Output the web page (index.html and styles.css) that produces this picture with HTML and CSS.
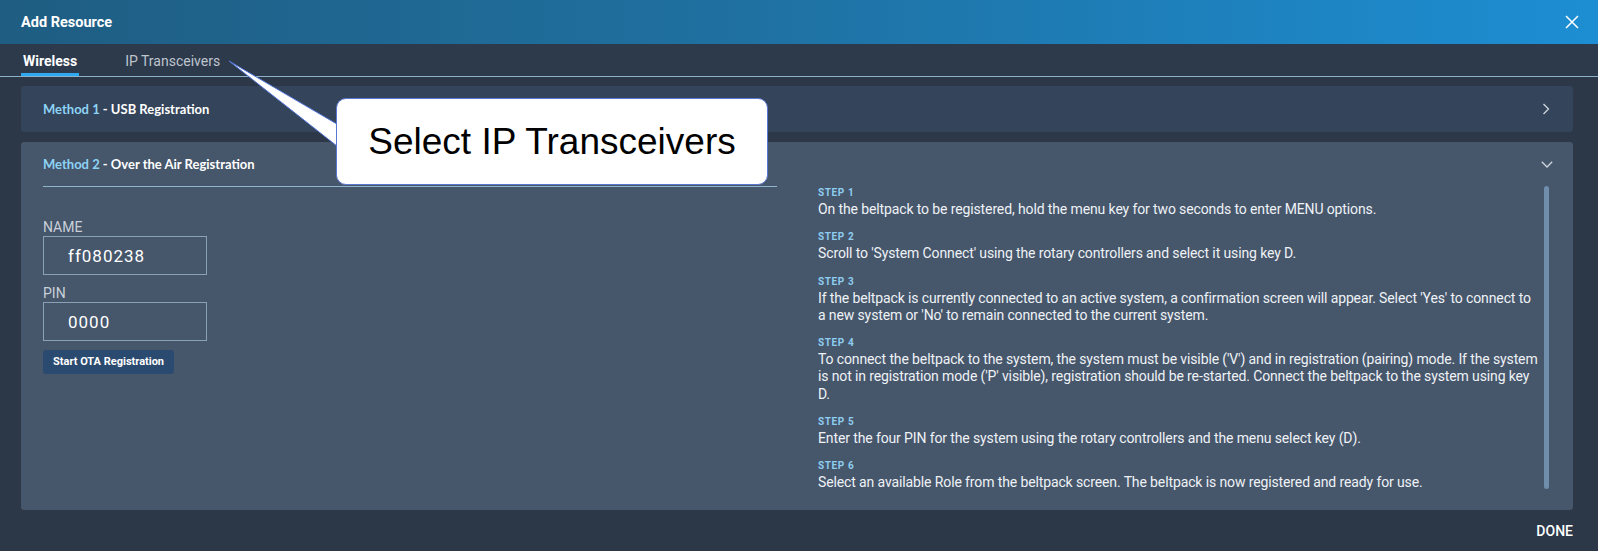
FILE: index.html
```html
<!DOCTYPE html>
<html>
<head>
<meta charset="utf-8">
<link rel="stylesheet" href="styles.css">
</head>
<body>
<div class="dialog">
  <div class="header">
    <div class="title">Add Resource</div>
    <svg class="close" width="14" height="14" viewBox="0 0 14 14"><path d="M1 1L13 13M13 1L1 13" stroke="#fff" stroke-width="1.5" fill="none"/></svg>
  </div>
  <div class="tabs">
    <div class="tab active">Wireless</div>
    <div class="tab">IP Transceivers</div>
  </div>
  <div class="content">
    <div class="card card1">
      <div class="mtitle"><span class="mnum">Method 1</span> - USB Registration</div>
      <svg class="chev" width="8" height="12" viewBox="0 0 8 12"><path d="M1.5 1L6.5 6L1.5 11" stroke="#d0d6de" stroke-width="1.3" fill="none"/></svg>
    </div>
    <div class="card card2">
      <div class="c2head"><div class="mtitle"><span class="mnum">Method 2</span> - Over the Air Registration</div></div>
      <div class="c2chev"><svg width="12" height="7" viewBox="0 0 12 7"><path d="M0.8 0.8L6 6L11.2 0.8" stroke="#d0d6de" stroke-width="1.3" fill="none"/></svg></div>
      <div class="form">
        <div class="label">NAME</div>
        <div class="input">ff080238</div>
        <div class="label pin">PIN</div>
        <div class="input">0000</div>
        <div class="btn">Start OTA Registration</div>
      </div>
      <div class="stepscol">
        <div class="steps">
          <div class="step"><div class="slabel">STEP 1</div><div class="stext">On the beltpack to be registered, hold the menu key for two seconds to enter MENU options.</div></div>
          <div class="step"><div class="slabel">STEP 2</div><div class="stext">Scroll to 'System Connect' using the rotary controllers and select it using key D.</div></div>
          <div class="step"><div class="slabel">STEP 3</div><div class="stext">If the beltpack is currently connected to an active system, a confirmation screen will appear. Select 'Yes' to connect to a new system or 'No' to remain connected to the current system.</div></div>
          <div class="step"><div class="slabel">STEP 4</div><div class="stext">To connect the beltpack to the system, the system must be visible ('V') and in registration (pairing) mode. If the system is not in registration mode ('P' visible), registration should be re-started. Connect the beltpack to the system using key D.</div></div>
          <div class="step"><div class="slabel">STEP 5</div><div class="stext">Enter the four PIN for the system using the rotary controllers and the menu select key (D).</div></div>
          <div class="step"><div class="slabel">STEP 6</div><div class="stext">Select an available Role from the beltpack screen. The beltpack is now registered and ready for use.</div></div>
        </div>
        <div class="thumb"></div>
      </div>
    </div>
    <div class="footer"><span class="done">DONE</span></div>
  </div>
  <div class="callout">
    <svg class="pointer" width="350" height="160" viewBox="0 0 350 160"><polygon points="229,61 342,127 342,150" fill="#fff" stroke="#4f72d6" stroke-width="1"/></svg>
    <div class="cbox">Select IP Transceivers</div>
  </div>
</div>
</body>
</html>
```

FILE: styles.css
```css
html, body {
  margin: 0;
  padding: 0;
}
body {
  background: #2c3747;
  font-family: Roboto, "Liberation Sans", sans-serif;
  width: 1598px;
  height: 551px;
  overflow: hidden;
}
.dialog {
  position: relative;
  height: 551px;
}
.header {
  height: 44px;
  background: linear-gradient(90deg, #1f5d82 0%, #1f70a0 45%, #1d8ed3 100%);
  display: flex;
  align-items: center;
  justify-content: space-between;
  padding: 0 19px 0 21px;
}
.title {
  color: #fff;
  font-weight: 700;
  font-size: 14.5px;
}
.close {
  display: block;
}
.tabs {
  height: 32px;
  border-bottom: 1px solid #8db2c8;
  display: flex;
  padding-left: 21px;
  gap: 44px;
  background: #2d3a4c;
}
.tab {
  padding: 9px 2px 4px;
  line-height: 16px;
  font-size: 14px;
  color: #bfc5ce;
  border-bottom: 3px solid transparent;
}
.tab.active {
  color: #fff;
  font-weight: 700;
  border-bottom-color: #2ea8f0;
}
.content {
  padding: 9px 25px 0 21px;
}
.card {
  border-radius: 3px;
}
.card1 {
  height: 46px;
  background: #34445a;
  display: flex;
  align-items: center;
  justify-content: space-between;
  padding: 0 23px 0 22px;
}
.chev {
  display: block;
}
.mtitle {
  font-family: Lato, "Open Sans", sans-serif;
  font-weight: 700;
  font-size: 13px;
  line-height: 16px;
  color: #fff;
}
.mnum {
  color: #8dd3f5;
}
.card2 {
  margin-top: 10px;
  background: #46566b;
  padding: 0 20px 20px 22px;
  display: grid;
  grid-template-columns: 734px 1fr;
  column-gap: 40px;
}
.c2head {
  padding: 14px 0;
  border-bottom: 1px solid #8fb5cc;
}
.c2chev {
  justify-self: end;
  align-self: center;
  display: flex;
  margin-top: 0;
}
.form {
  padding-top: 32px;
}
.label {
  font-size: 14px;
  line-height: 16px;
  color: #c9d0d9;
  margin-bottom: 1px;
}
.label.pin {
  margin-top: 10px;
}
.input {
  width: 138px;
  height: 37px;
  border: 1px solid #8aa2b6;
  padding-left: 24px;
  display: flex;
  align-items: center;
  font-size: 17px;
  letter-spacing: 1px;
  color: #fff;
}
.btn {
  margin-top: 9px;
  display: inline-block;
  height: 24px;
  line-height: 24px;
  padding: 0 10px;
  background: #2b4a6f;
  border-radius: 3px;
  color: #fff;
  font-weight: 700;
  font-size: 11px;
}
.stepscol {
  display: flex;
  align-items: flex-start;
  height: 303px;
}
.steps {
  flex: 1;
  height: 303px;
  overflow: hidden;
  padding-left: 1px;
  display: flex;
  flex-direction: column;
  gap: 13px;
}
.slabel {
  font-size: 10px;
  font-weight: 700;
  letter-spacing: 0.6px;
  line-height: 12px;
  color: #8ecdef;
  margin-bottom: 2px;
}
.stext {
  font-size: 14px;
  line-height: 17.3px;
  letter-spacing: -0.12px;
  color: #eef2f6;
}
.thumb {
  width: 5px;
  height: 303px;
  margin-top: -1px;
  margin-left: 3px;
  margin-right: 4px;
  border-radius: 3px;
  background: #6e8eab;
}
.footer {
  display: flex;
  justify-content: flex-end;
  padding-top: 13px;
}
.done {
  font-size: 14px;
  font-weight: 500;
  line-height: 16px;
  color: #fff;
}
.callout {
  position: absolute;
  left: 0;
  top: 0;
  width: 800px;
  height: 200px;
  pointer-events: none;
}
.pointer {
  position: absolute;
  left: 0;
  top: 0;
}
.cbox {
  position: absolute;
  left: 336px;
  top: 98px;
  width: 430px;
  height: 85px;
  background: #fff;
  border: 1px solid #5a78d2;
  border-radius: 10px;
  display: flex;
  align-items: center;
  justify-content: center;
  font-family: "Liberation Sans", Arial, sans-serif;
  font-size: 37px;
  color: #000;
}
```
